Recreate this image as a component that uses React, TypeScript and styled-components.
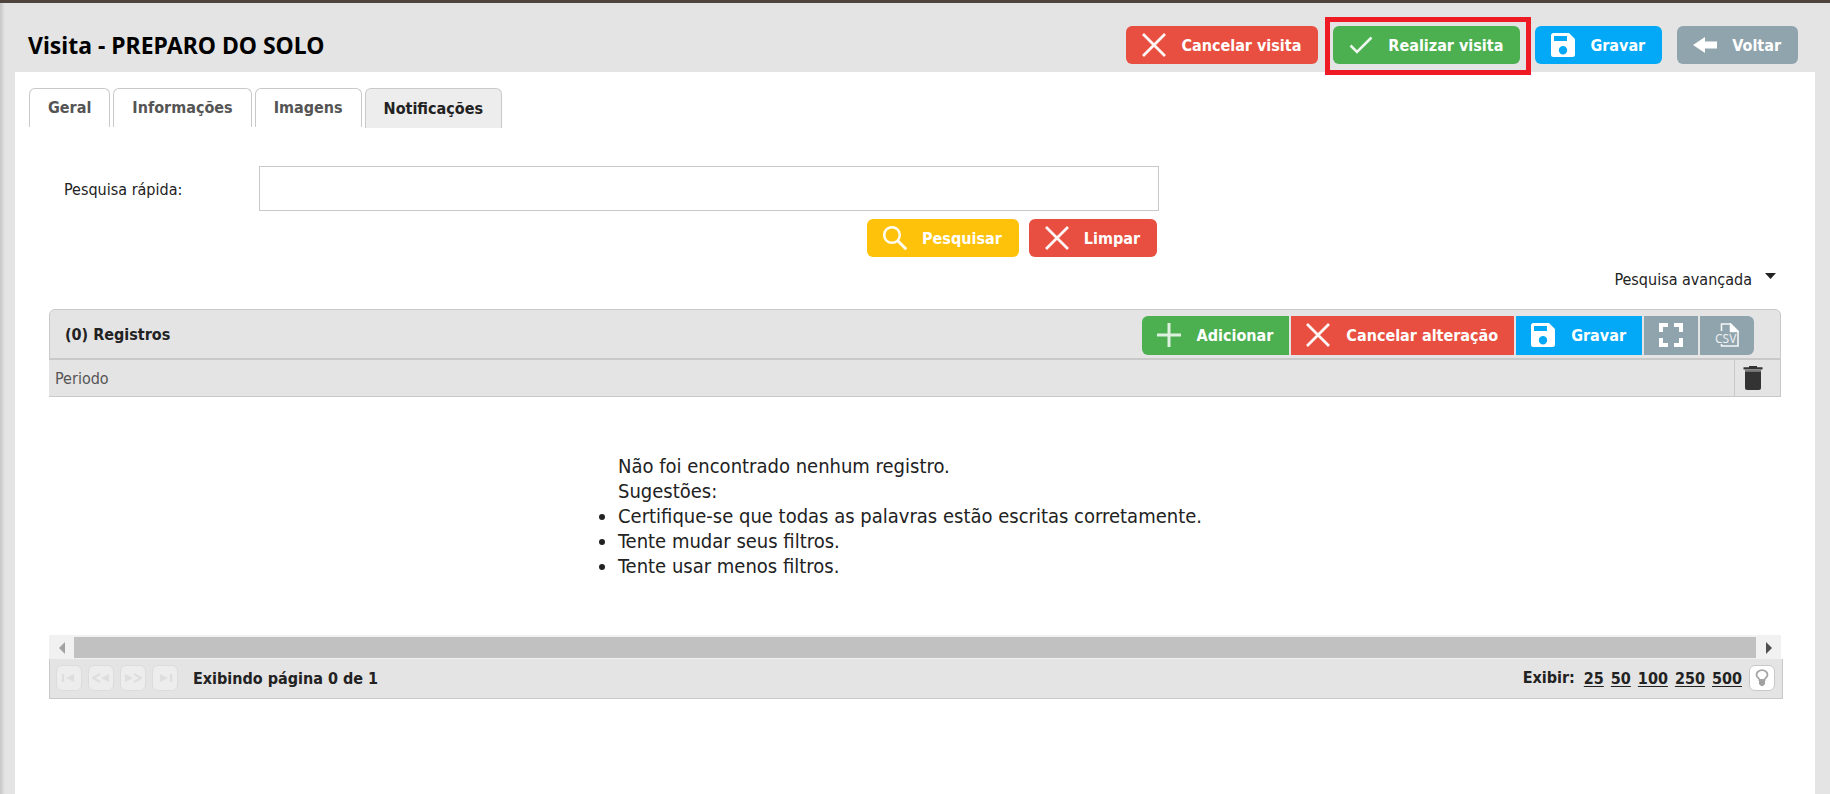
import React from 'react';
import styled, { createGlobalStyle, css } from 'styled-components';

const colors = {
  red: '#e84f40',
  green: '#4caf50',
  blue: '#03a9f7',
  slate: '#90a4ae',
  amber: '#ffc20a',
  grey: '#e4e4e4',
  line: '#c9c9c9',
  text: '#222',
};

const GlobalStyle = createGlobalStyle`
  *, *::before, *::after { box-sizing: border-box; }
  body {
    margin: 0;
    background: ${colors.grey};
    color: ${colors.text};
    font-family: "DejaVu Sans Condensed", "Noto Sans", sans-serif;
    font-size: 16px;
    line-height: 20px;
  }
  button, input { font: inherit; color: inherit; }
`;

const Page = styled.div`
  min-height: 100vh;
  display: flex;
  flex-direction: column;
  border-top: 3px solid #4d443e;
  background: linear-gradient(to right, #c6c6c6, ${colors.grey} 5px);
`;

const Header = styled.header`
  display: flex;
  align-items: center;
  justify-content: space-between;
  padding: 14px 32px 6px 28px;
`;

const Title = styled.h1`
  margin: 0;
  padding-top: 6px;
  color: #000;
  font-family: "Noto Sans", sans-serif;
  font-size: 23px;
  font-weight: 700;
  line-height: 32px;
`;

const Actions = styled.div`
  display: flex;
  gap: 15px;
  padding: 9px 0 2px;
`;

const buttonBase = css`
  display: flex;
  align-items: center;
  justify-content: center;
  border: 0;
  padding: 0;
  cursor: pointer;
`;

const filledButton = css<{ $color: string }>`
  ${buttonBase}
  background: ${({ $color }) => $color};
  color: #fff;
  font-weight: 700;
  white-space: nowrap;

  svg { margin-bottom: 2px; }
`;

const ActionButton = styled.button<{ $color: string }>`
  ${filledButton}
  position: relative;
  gap: 15px;
  height: 38px;
  padding: 2px 17px 0 16px;
  border-radius: 6px;
`;

const Highlight = styled.span`
  position: absolute;
  inset: -9px -11px -11px -8px;
  border: 5px solid #ee1b24;
  pointer-events: none;
`;

const Panel = styled.main`
  flex: 1;
  margin: 0 15px;
  padding: 16px 14px 0;
  background: #fff;
`;

const Tabs = styled.div`
  display: flex;
  gap: 3px;
`;

const Tab = styled.button<{ $active?: boolean }>`
  ${buttonBase}
  height: ${({ $active }) => ($active ? 40 : 39)}px;
  padding: 0 18px;
  border: 1px solid ${colors.line};
  border-bottom: 0;
  border-radius: 6px 6px 0 0;
  background: ${({ $active }) => ($active ? '#ededed' : '#fff')};
  color: ${({ $active }) => ($active ? colors.text : '#555')};
  font-weight: 700;
`;

const Content = styled.section`
  padding: 38px 20px 0;
`;

const Search = styled.form`
  display: grid;
  grid-template-columns: 180px minmax(0, 900px);
  column-gap: 15px;
  row-gap: 8px;
  align-items: center;
  padding-left: 15px;
`;

const SearchLabel = styled.label`
  padding-top: 2px;
`;

const SearchInput = styled.input`
  width: 100%;
  height: 45px;
  padding: 0 10px;
  border: 1px solid ${colors.line};
  background: #fff;
`;

const SearchActions = styled.div`
  grid-column: 2;
  display: flex;
  justify-content: flex-end;
  gap: 10px;
  padding-right: 2px;
`;

const Advanced = styled.button`
  ${buttonBase}
  gap: 13px;
  margin: 13px 5px 19px auto;
  background: none;
`;

const Toolbar = styled.div`
  display: flex;
  align-items: center;
  justify-content: space-between;
  height: 50px;
  padding: 2px 26px 0 15px;
  border: 1px solid ${colors.line};
  border-radius: 6px 6px 0 0;
  background: ${colors.grey};
`;

const ToolbarTitle = styled.h2`
  margin: 0;
  font-size: 16px;
  font-weight: 700;
`;

const ToolGroup = styled.div`
  display: flex;
  gap: 2px;
  border-radius: 6px;
  overflow: hidden;
`;

const ToolButton = styled.button<{ $color: string; $iconOnly?: boolean }>`
  ${filledButton}
  gap: 16px;
  height: 39px;
  padding: 2px ${({ $iconOnly }) => ($iconOnly ? 15 : 16)}px 0 15px;
`;

const Grid = styled.table`
  width: 100%;
  border-collapse: collapse;
  border-bottom: 1px solid ${colors.line};
  background: ${colors.grey};
`;

const HeadCell = styled.th<{ $narrow?: boolean }>`
  width: ${({ $narrow }) => ($narrow ? '46px' : 'auto')};
  height: 37px;
  padding: ${({ $narrow }) => ($narrow ? '0 8px' : '2px 6px 0')};
  border: 0 solid ${colors.line};
  border-top-width: 1px;
  border-left-width: ${({ $narrow }) => ($narrow ? 1 : 0)}px;
  border-right-width: ${({ $narrow }) => ($narrow ? 1 : 0)}px;
  color: #555;
  font-weight: 400;
  text-align: left;
`;

const TrashButton = styled.button`
  ${buttonBase}
  background: none;
`;

const Empty = styled.div`
  display: flex;
  justify-content: center;
  padding: 57px 0 56px;
  font-size: 20px;
  line-height: 25px;
`;

const Message = styled.div`
  flex: 0 1 594px;
`;

const Suggestions = styled.ul`
  margin: 0;
  padding: 0;
`;

const Line = styled.p`
  margin: 0;
`;

const ScrollBar = styled.div`
  display: flex;
  height: 24px;
  padding: 2px 0 1px;
  background: #f1f1f1;
`;

const ScrollArrow = styled.button`
  ${buttonBase}
  width: 25px;
  background: none;
`;

const ScrollThumb = styled.div`
  flex: 1;
  background: #c1c1c1;
`;

const Footer = styled.footer`
  display: flex;
  align-items: center;
  justify-content: space-between;
  height: 40px;
  margin-right: -2px;
  padding: 0 7px 2px 6px;
  border: 1px solid ${colors.line};
  border-top: 0;
  background: ${colors.grey};
  font-weight: 700;
`;

const FooterGroup = styled.div<{ $gap: number }>`
  display: flex;
  align-items: center;
  gap: ${({ $gap }) => $gap}px;
`;

const PageStatus = styled.span`
  padding: 2px 0 0 9px;
`;

const SizeLabel = styled.span`
  padding-right: 2px;
`;

const SquareButton = styled.button`
  ${buttonBase}
  width: 26px;
  height: 26px;
  border: 1px solid ${colors.line};
  border-radius: 6px;
  background: #fff;

  &:disabled {
    border-color: #dcdcdc;
    background: #ededed;
    cursor: default;
  }
`;

const SizeLink = styled.a`
  padding-top: 3px;
  color: inherit;
  text-decoration: underline;
  text-underline-offset: 2px;
`;

const Cross = () => (
  <svg width="24" height="24" viewBox="0 0 24 24" fill="none" stroke="#fff" strokeWidth="2.8" strokeOpacity=".95" aria-hidden="true">
    <path d="M1 1 23 23M23 1 1 23" />
  </svg>
);

const Check = () => (
  <svg width="24" height="24" viewBox="0 0 24 24" fill="none" stroke="#fff" strokeOpacity=".9" strokeWidth="2.6" aria-hidden="true">
    <path d="M1.500 12.500 8 19 22.500 4.500" />
  </svg>
);

const Plus = () => (
  <svg width="24" height="24" viewBox="0 0 24 24" fill="none" stroke="#fff" strokeOpacity=".82" strokeWidth="3" aria-hidden="true">
    <path d="M12 0v24M0 12h10.500M13.500 12H24" />
  </svg>
);

const Disk = () => (
  <svg width="24" height="24" viewBox="0 0 24 24" fill="#fff" fillRule="evenodd" aria-hidden="true">
    <path d="M2.500 0H18l6 6v15.500A2.500 2.500 0 0 1 21.500 24h-19A2.500 2.500 0 0 1 0 21.500v-19A2.500 2.500 0 0 1 2.500 0ZM3 3v5h13V3ZM12 13a4.200 4.200 0 1 0 0 8.400 4.200 4.200 0 0 0 0-8.400Z" />
  </svg>
);

const BackArrow = () => (
  <svg width="24" height="24" viewBox="0 0 24 24" fill="#fff" aria-hidden="true">
    <path d="M0 12 12 4v4.500h12v7H12V20Z" />
  </svg>
);

const Magnifier = () => (
  <svg width="24" height="24" viewBox="0 0 24 24" fill="none" stroke="#fff" strokeOpacity=".95" strokeWidth="2.500" aria-hidden="true">
    <circle cx="9" cy="9" r="7.800" />
    <path d="m14.500 14.500 8.800 8.800" strokeWidth="3" />
  </svg>
);

const Expand = () => (
  <svg width="24" height="24" viewBox="0 0 24 24" fill="none" stroke="#fff" strokeWidth="4" aria-hidden="true">
    <path d="M2 9V2h7M15 2h7v7M22 15v7h-7M9 22H2v-7" />
  </svg>
);

const CsvFile = () => (
  <svg width="24" height="24" viewBox="0 0 24 24" fill="none" stroke="#fff" strokeOpacity=".9" strokeWidth="1.600" aria-hidden="true">
    <path d="M6.500 8V1h9L23 8.500V23H6.500v-2" />
    <path d="M15.500 1v7.500H23Z" fill="#fff" />
    <text x="0" y="20" fill="#fff" fillOpacity=".85" stroke="none" fontFamily="Noto Sans" fontSize="12" fontWeight="400">CSV</text>
  </svg>
);

const Trash = () => (
  <svg width="20" height="24" viewBox="0 0 20 24" fill="#333" aria-hidden="true">
    <path d="M6 0h8v1.200h5.500v2.300H.5V1.200H6Z" />
    <path d="M2 4h16v1.500H2Z" fillOpacity=".6" />
    <path d="M2 5.500h16V22a2 2 0 0 1-2 2H4a2 2 0 0 1-2-2Z" />
  </svg>
);

const CaretDown = () => (
  <svg width="11" height="20" viewBox="0 0 11 20" fill="#222" aria-hidden="true">
    <path d="M0 3h11L5.500 9Z" />
  </svg>
);

const Triangle = ({ left, fill }: { left?: boolean; fill: string }) => (
  <svg width="6" height="12" viewBox="0 0 6 12" fill={fill} aria-hidden="true">
    <path d={left ? 'M6 0v12L0 6Z' : 'M0 0v12l6-6Z'} />
  </svg>
);

const PagerIcon = ({ d, line }: { d: string; line: string }) => (
  <svg width="18" height="10" viewBox="0 0 18 10" fill="#dedede" aria-hidden="true">
    <path d={d} />
    <path d={line} fill="none" stroke="#dedede" strokeWidth="2.200" />
  </svg>
);

const Bulb = () => (
  <svg width="14" height="18" viewBox="0 0 14 18" aria-hidden="true">
    <path d="M4.500 11C4.500 9 1.500 8.500 1.500 5.700a5.500 4.500 0 0 1 11 0c0 2.800-3 3.300-3 5.300Z" fill="none" stroke="#a6a6a6" strokeWidth="1.800" />
    <path d="M4 11.500h6v3.500l-2 2H6l-2-2Z" fill="#a0a0a0" />
  </svg>
);

const tabs = ['Geral', 'Informações', 'Imagens', 'Notificações'];

const pagers = [
  { label: 'Primeira página', d: 'M14 1v8L6 5Z', line: 'M3 1v8' },
  { label: 'Página anterior', d: 'M17 1v8L9 5Z', line: 'M8 1 1 5l7 4' },
  { label: 'Próxima página', d: 'M1 1v8l8-4Z', line: 'm10 1 7 4-7 4' },
  { label: 'Última página', d: 'M4 1v8l8-4Z', line: 'M15 1v8' },
];

export default function App() {
  return (
    <>
      <GlobalStyle />
      <Page>
        <Header>
          <Title>Visita - PREPARO DO SOLO</Title>
          <Actions>
            <ActionButton type="button" $color={colors.red}><Cross />Cancelar visita</ActionButton>
            <ActionButton type="button" $color={colors.green}><Check />Realizar visita<Highlight /></ActionButton>
            <ActionButton type="button" $color={colors.blue}><Disk />Gravar</ActionButton>
            <ActionButton type="button" $color={colors.slate}><BackArrow />Voltar</ActionButton>
          </Actions>
        </Header>
        <Panel>
          <Tabs role="tablist">
            {tabs.map((name) => {
              const active = name === 'Notificações';
              return (
                <Tab key={name} type="button" role="tab" aria-selected={active} $active={active}>{name}</Tab>
              );
            })}
          </Tabs>
          <Content>
            <Search onSubmit={(e) => e.preventDefault()}>
              <SearchLabel htmlFor="quick-search">Pesquisa rápida:</SearchLabel>
              <SearchInput id="quick-search" type="text" />
              <SearchActions>
                <ActionButton type="submit" $color={colors.amber}><Magnifier />Pesquisar</ActionButton>
                <ActionButton type="reset" $color={colors.red}><Cross />Limpar</ActionButton>
              </SearchActions>
            </Search>
            <Advanced type="button">Pesquisa avançada<CaretDown /></Advanced>
            <Toolbar>
              <ToolbarTitle>(0) Registros</ToolbarTitle>
              <ToolGroup>
                <ToolButton type="button" $color={colors.green}><Plus />Adicionar</ToolButton>
                <ToolButton type="button" $color={colors.red}><Cross />Cancelar alteração</ToolButton>
                <ToolButton type="button" $color={colors.blue}><Disk />Gravar</ToolButton>
                <ToolButton type="button" $color={colors.slate} $iconOnly aria-label="Expandir"><Expand /></ToolButton>
                <ToolButton type="button" $color={colors.slate} $iconOnly aria-label="Exportar CSV"><CsvFile /></ToolButton>
              </ToolGroup>
            </Toolbar>
            <Grid>
              <thead>
                <tr>
                  <HeadCell scope="col">Periodo</HeadCell>
                  <HeadCell scope="col" $narrow>
                    <TrashButton type="button" aria-label="Excluir"><Trash /></TrashButton>
                  </HeadCell>
                </tr>
              </thead>
            </Grid>
            <Empty>
              <Message>
                <Line>Não foi encontrado nenhum registro.</Line>
                <Line>Sugestões:</Line>
                <Suggestions>
                  <li>Certifique-se que todas as palavras estão escritas corretamente.</li>
                  <li>Tente mudar seus filtros.</li>
                  <li>Tente usar menos filtros.</li>
                </Suggestions>
              </Message>
            </Empty>
            <ScrollBar>
              <ScrollArrow type="button" aria-label="Rolar para a esquerda"><Triangle left fill="#a3a3a3" /></ScrollArrow>
              <ScrollThumb />
              <ScrollArrow type="button" aria-label="Rolar para a direita"><Triangle fill="#505050" /></ScrollArrow>
            </ScrollBar>
            <Footer>
              <FooterGroup $gap={6}>
                {pagers.map((p) => (
                  <SquareButton key={p.label} type="button" disabled aria-label={p.label}>
                    <PagerIcon d={p.d} line={p.line} />
                  </SquareButton>
                ))}
                <PageStatus>Exibindo página 0 de 1</PageStatus>
              </FooterGroup>
              <FooterGroup $gap={7}>
                <SizeLabel>Exibir:</SizeLabel>
                {[25, 50, 100, 250, 500].map((n) => (
                  <SizeLink key={n} href={`#${n}`}>{n}</SizeLink>
                ))}
                <SquareButton type="button" aria-label="Dica"><Bulb /></SquareButton>
              </FooterGroup>
            </Footer>
          </Content>
        </Panel>
      </Page>
    </>
  );
}
